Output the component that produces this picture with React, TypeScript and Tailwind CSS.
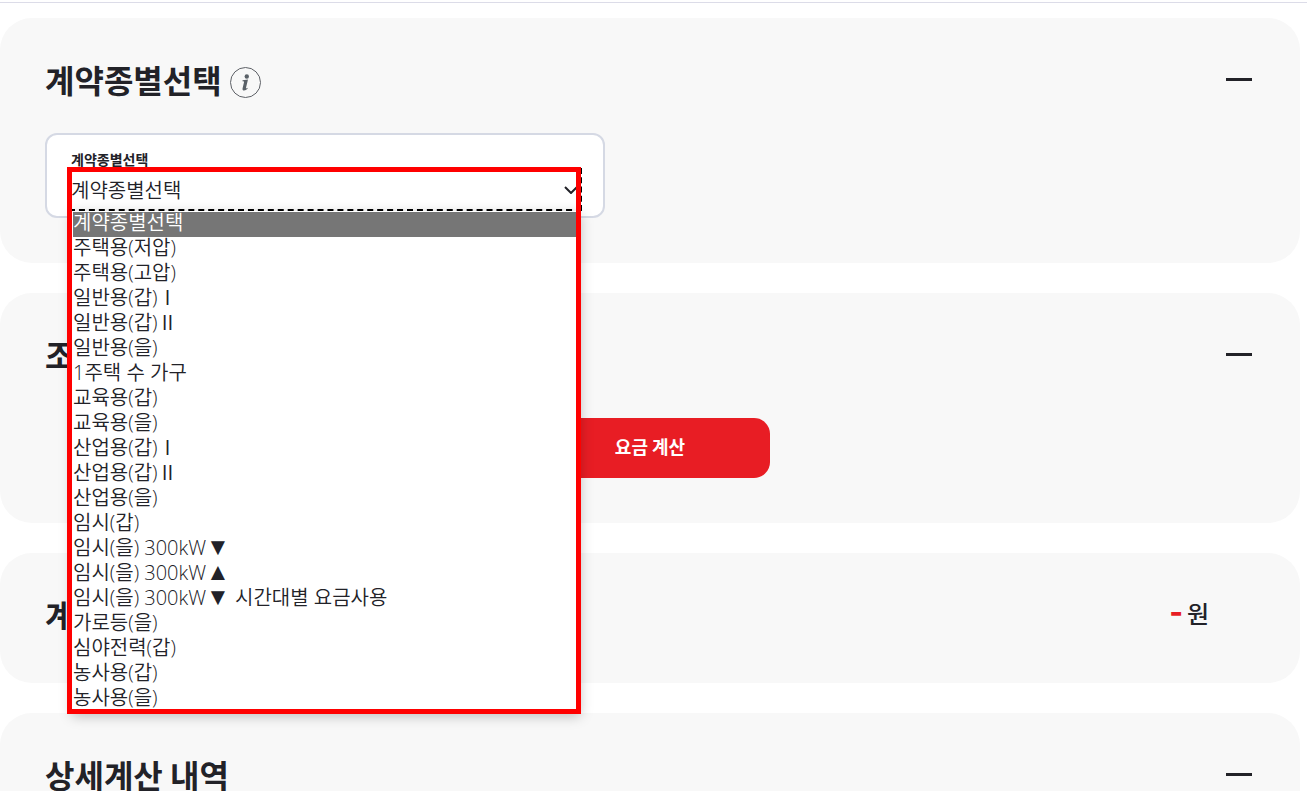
import { Fragment, useState } from "react";
import type { ReactNode } from "react";

const CONTRACT_TYPES = [
  "계약종별선택",
  "주택용(저압)",
  "주택용(고압)",
  "일반용(갑)Ⅰ",
  "일반용(갑)Ⅱ",
  "일반용(을)",
  "1주택 수 가구",
  "교육용(갑)",
  "교육용(을)",
  "산업용(갑)Ⅰ",
  "산업용(갑)Ⅱ",
  "산업용(을)",
  "임시(갑)",
  "임시(을) 300kW▼",
  "임시(을) 300kW▲",
  "임시(을) 300kW▼ 시간대별 요금사용",
  "가로등(을)",
  "심야전력(갑)",
  "농사용(갑)",
  "농사용(을)",
];

type PanelProps = {
  title: string;
  info?: boolean;
  aside?: ReactNode;
  children?: ReactNode;
};

function ToggleButton({ title }: { title: string }) {
  return (
    <button
      type="button"
      aria-label={`${title} 접기`}
      className="flex h-10 items-center pr-[3px]"
    >
      <span className="h-[3px] w-[26px] bg-[#222228]" />
    </button>
  );
}

function InfoButton() {
  return (
    <button type="button" aria-label="도움말" className="mt-1.5">
      <svg viewBox="0 0 31 31" className="block h-[31px] w-[31px]">
        <circle cx="15.5" cy="15.5" r="15" fill="none" stroke="#5d6066" />
        <circle cx="16.8" cy="9.5" r="2.2" fill="#5a6168" />
        <path
          d="M12.6 13.2L18 12.6 16 20.8C15.8 21.8 16.2 21.8 17.4 20.8L17.7 21.6C15.6 24.2 11.8 24.4 12.6 21.2L14 15.2C14.2 14.4 13.8 14.2 12.4 14.2Z"
          fill="#5a6168"
        />
      </svg>
    </button>
  );
}

function Panel({ title, info, aside, children }: PanelProps) {
  return (
    <section className="rounded-[32px] bg-[#f8f8f8] px-[45px] pt-10 pb-[45px]">
      <div className="flex h-[45px] items-center justify-between pb-0.5">
        <div className="flex items-center gap-2">
          <h2 className="text-[32px] leading-[43px] font-bold">{title}</h2>
          {info && <InfoButton />}
        </div>
        {aside ?? <ToggleButton title={title} />}
      </div>
      {children}
    </section>
  );
}

// The CJK face draws its triangles a full em wide, so they get a narrower one.
function OptionText({ text }: { text: string }) {
  return text.split(/([▼▲])/).map((part, i) =>
    part === "▼" || part === "▲" ? (
      <span
        key={i}
        className="font-['DejaVu_Sans',sans-serif] text-2xl leading-[0]"
      >
        {part}
      </span>
    ) : (
      <Fragment key={i}>{part}</Fragment>
    ),
  );
}

function ContractSelect() {
  const [value, setValue] = useState(CONTRACT_TYPES[0]);

  return (
    <div className="mt-[30px] h-[85px] w-full max-w-[560px] rounded-xl border-2 border-[#d5d9e4] bg-white pt-[14px] pr-[23px] pl-6">
      <label
        htmlFor="contract-type"
        className="block h-5 text-sm leading-5 font-bold"
      >
        계약종별선택
      </label>
      <div className="relative mt-px">
        <select
          id="contract-type"
          value={value}
          onChange={(e) => setValue(e.target.value)}
          className="block h-[39px] w-full appearance-none bg-white text-xl font-[350] outline-2 outline-black outline-dashed"
        >
          {CONTRACT_TYPES.map((type) => (
            <option key={type}>{type}</option>
          ))}
        </select>
        <svg
          viewBox="0 0 14 8"
          fill="none"
          stroke="#222228"
          strokeWidth="2"
          className="pointer-events-none absolute top-4 right-0.5 h-2 w-3.5"
        >
          <path d="M1 1l6 6 6-6" />
        </svg>
        <ul
          role="listbox"
          aria-label="계약종별"
          className="absolute top-[41px] right-0 left-px z-10 border border-white bg-white font-['Open_Sans','Noto_Sans_CJK_KR',sans-serif] text-xl font-[350] shadow-[0_3px_12px_rgba(0,0,0,0.25)]"
        >
          {CONTRACT_TYPES.map((type) => (
            <li
              key={type}
              role="option"
              aria-selected={type === value}
              onClick={() => setValue(type)}
              className="h-[25px] cursor-default leading-[22px] whitespace-nowrap aria-selected:bg-[#767676] aria-selected:text-white"
            >
              <OptionText text={type} />
            </li>
          ))}
        </ul>
        <div className="pointer-events-none absolute -top-[3px] -right-px -left-1 z-20 h-[547px] border-5 border-[#ff0000]" />
      </div>
    </div>
  );
}

export default function App() {
  return (
    <div className="bg-white pt-0.5 font-['Noto_Sans_CJK_KR',sans-serif] text-[#222228]">
      <div className="h-px bg-[#dcdce8]" />
      <main className="mt-[15px] mr-[7px] flex flex-col gap-[30px]">
        <Panel title="계약종별선택" info>
          <ContractSelect />
        </Panel>
        <Panel title="조회">
          <div className="mt-10 flex justify-center">
            <button
              type="button"
              className="h-[60px] w-60 rounded-2xl bg-[#e81d24] pb-1 text-lg font-bold text-white"
            >
              요금 계산
            </button>
          </div>
        </Panel>
        <Panel
          title="계산"
          aside={
            <p className="mr-[46px] flex items-center gap-1 pb-1 text-2xl font-medium">
              <strong className="pb-2 text-4xl leading-[43px] font-bold text-[#e81d24]">
                -
              </strong>
              원
            </p>
          }
        />
        <Panel title="상세계산 내역" />
      </main>
    </div>
  );
}
